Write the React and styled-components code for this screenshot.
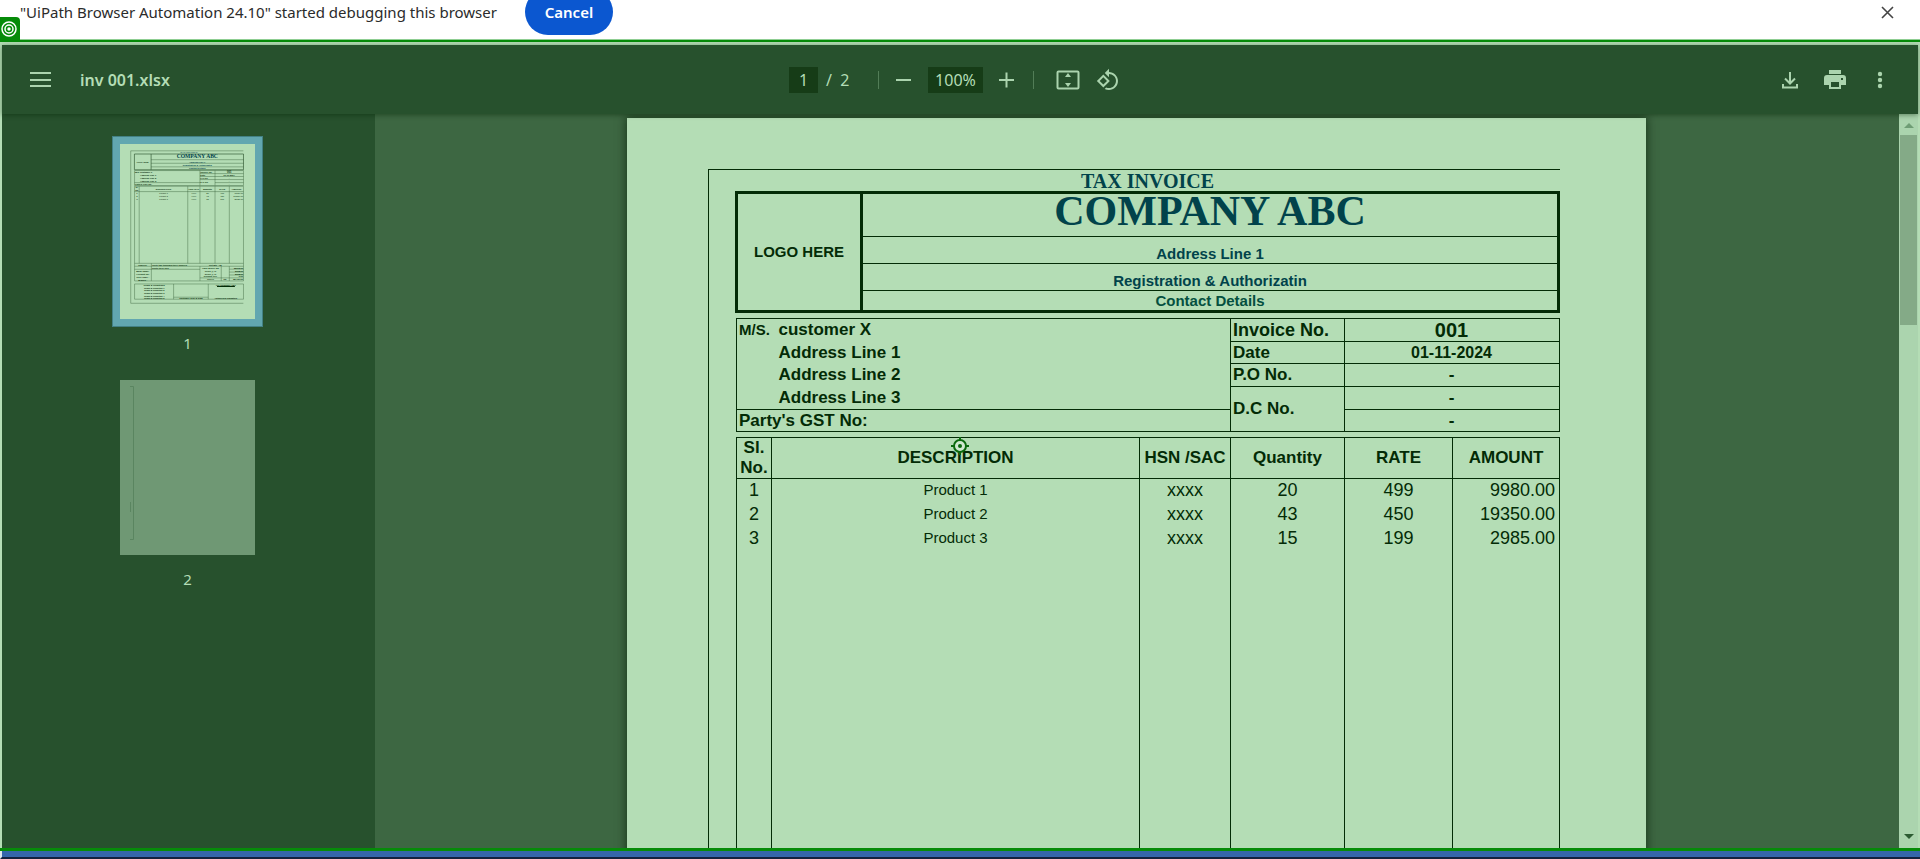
import React from "react";
import styled, { createGlobalStyle } from "styled-components";

const color = {
  toolbar: "#27512d",
  body: "#3d6742",
  page: "#b4ddb5",
  pale: "#abd4ae",
  field: "#163c17",
  ink: "#032b06",
  heading: "#01434b",
  contact: "#05503f",
  highlight: "#068b09",
};

const arial = '"Liberation Sans", Arial, sans-serif';
const serif = '"Liberation Serif", "Times New Roman", serif';
const ui = '"Noto Sans", "Open Sans", sans-serif';

const GlobalStyle = createGlobalStyle`
  * { box-sizing: border-box; }
  body { margin: 0; background: #fff; overflow: hidden; font-family: ${ui}; }
  button, input { font: inherit; }
`;

const Window = styled.div`
  position: relative;
  display: flex;
  flex-direction: column;
  height: 100vh;
`;

/* Browser notice */
const NoticeBar = styled.div`
  height: 39px;
  flex: none;
  overflow: hidden;
  background: #fff;
`;

const NoticeRow = styled.div`
  display: flex;
  align-items: center;
  height: 46px;
  margin-top: -11px;
  padding: 0 26px 0 20px;
  color: #2b2b2b;
  font-size: 15px;
`;

const CancelButton = styled.button`
  height: 46px;
  width: 88px;
  margin-left: 28px;
  padding: 0;
  border: 0;
  border-radius: 23px;
  background: #0b57d0;
  color: #fff;
  font-size: 15px;
  font-weight: 600;
`;

const CloseButton = styled.button`
  display: flex;
  margin-left: auto;
  padding: 0;
  border: 0;
  background: none;
  color: #444;
`;

const TargetTab = styled.div`
  position: absolute;
  left: 0;
  top: 17px;
  display: flex;
  align-items: center;
  width: 20px;
  height: 23px;
  border-radius: 0 4px 0 0;
  background: ${color.highlight};
`;

/* Highlighted viewer */
const Viewer = styled.div`
  position: relative;
  display: flex;
  flex: 1;
  flex-direction: column;
  min-height: 0;
  border-top: 1px solid #8fce92;
  border-bottom: 3px solid ${color.highlight};
`;

const ViewerInner = styled.div`
  display: flex;
  flex: 1;
  flex-direction: column;
  min-height: 0;
  border: solid ${color.page};
  border-width: 3px 2px 0;
  box-shadow: 0 -2px 0 ${color.highlight};
  margin-top: 2px;
`;

const Toolbar = styled.header`
  position: relative;
  z-index: 1;
  display: grid;
  grid-template-columns: 1fr auto 1fr;
  align-items: center;
  height: 69px;
  flex: none;
  padding: 0 22px;
  background: ${color.toolbar};
  box-shadow: 0 1px 5px rgba(0, 30, 0, 0.45);
  color: ${color.page};
  font-size: 16px;
`;

const TitleGroup = styled.div`
  display: flex;
  align-items: center;
  gap: 24px;
`;

const FileName = styled.h1`
  margin: 0;
  font-size: 16px;
  font-weight: 600;
`;

const PageControls = styled.div`
  display: flex;
  align-items: center;
  gap: 8px;
  padding-right: 7px;
`;

const Actions = styled.div`
  display: flex;
  justify-content: flex-end;
  gap: 13px;
`;

const IconButton = styled.button`
  display: flex;
  align-items: center;
  justify-content: center;
  width: 32px;
  height: 32px;
  padding: 0;
  border: 0;
  background: none;
  color: ${color.pale};
`;

const Field = styled.input`
  width: ${(p) => p.$width}px;
  height: 26px;
  padding: 0;
  border: 0;
  background: ${color.field};
  color: ${color.page};
  text-align: center;
`;

const PageCount = styled.span`
  width: 44px;
  white-space: pre;
`;

const Divider = styled.span`
  width: 1px;
  height: 18px;
  margin: 0 ${(p) => p.$after}px 0 ${(p) => p.$before}px;
  background: #527d57;
`;

const Main = styled.div`
  display: flex;
  flex: 1;
  min-height: 0;
  background: ${color.body};
`;

/* Thumbnails */
const Sidebar = styled.nav`
  display: flex;
  flex: none;
  flex-direction: column;
  align-items: center;
  gap: 15px;
  width: 373px;
  padding: 22px 2px 0 0;
  background: ${color.toolbar};
`;

const ThumbButton = styled.button`
  display: flex;
  flex-direction: column;
  align-items: center;
  gap: 2px;
  padding: 0;
  border: 0;
  background: none;
  color: ${color.page};
  font-size: 15px;
  line-height: 28px;
`;

const ThumbFrame = styled.span`
  display: block;
  padding: 7px;
  border: 1px solid ${(p) => (p.$active ? "#438184" : "transparent")};
  background: ${(p) => (p.$active ? "#62a7b0" : "transparent")};
`;

const ThumbPage = styled.svg`
  display: block;
  width: 135px;
  height: 175px;
  background: ${(p) => (p.$active ? color.page : "#6f9874")};
`;

/* Document */
const Canvas = styled.main`
  display: flex;
  flex: 1;
  justify-content: center;
  align-items: flex-start;
  min-width: 0;
  padding: 4px 1px 0 0;
  overflow: hidden;
`;

const Sheet = styled.article`
  flex: none;
  width: 1019px;
  height: 1321px;
  padding: 51px 0 0 81px;
  background: ${color.page};
  box-shadow: 0 0 9px 1px rgba(0, 25, 0, 0.6);
  color: ${color.ink};
  font-family: ${arial};
`;

const SheetFrame = styled.div`
  width: 852px;
  height: 1150px;
  padding-left: 26px;
  border: solid ${color.ink};
  border-width: 1px 0 0 1px;
`;

const InvoiceKind = styled.div`
  height: 21px;
  color: ${color.heading};
  font: bold 20px/22px ${serif};
  text-align: center;
`;

const Letterhead = styled.header`
  display: flex;
  border: 3px solid ${color.ink};
`;

const LogoSlot = styled.div`
  display: flex;
  align-items: center;
  justify-content: center;
  width: 125px;
  padding-bottom: 2px;
  border-right: 3px solid ${color.ink};
  font-size: 15px;
  font-weight: bold;
`;

const LetterheadLines = styled.div`
  flex: 1;
`;

const CompanyName = styled.h2`
  height: 43px;
  margin: 0;
  border-bottom: 1px solid ${color.ink};
  color: ${color.heading};
  font: bold 42px/34px ${serif};
  text-align: center;
`;

const LetterheadLine = styled.div`
  display: flex;
  align-items: flex-end;
  justify-content: center;
  height: 27px;
  border-bottom: 1px solid ${color.ink};
  color: ${color.heading};
  font-size: 15px;
  font-weight: bold;
  line-height: 19px;
  &:last-child {
    height: 19px;
    border-bottom: 0;
    color: ${color.contact};
  }
`;

const Table = styled.table`
  width: 824px;
  margin: 5px 0 0 1px;
  border: 1px solid ${color.ink};
  border-collapse: collapse;
  table-layout: fixed;
  font-size: 17px;
  line-height: 20px;
`;

const Row = styled.tr`
  height: ${(p) => p.$height}px;
`;

const Cell = styled.td`
  padding: 0 3px 0 2px;
  border: ${(p) => (p.$plain ? "0" : `1px solid ${color.ink}`)};
  font-size: ${(p) => p.$size || 17}px;
  font-weight: bold;
  text-align: ${(p) => (p.$center ? "center" : "left")};
`;

const HeadCell = styled.th`
  padding: 0 1px;
  border: 1px solid ${color.ink};
`;

const ItemCell = styled.td`
  padding: 0 4px 2px;
  border: solid ${color.ink};
  border-width: 0 1px;
  font-size: ${(p) => p.$size || 18}px;
  text-align: ${(p) => p.$align || "center"};
`;

/* Scroll bar */
const ScrollTrack = styled.div`
  display: flex;
  flex: none;
  flex-direction: column;
  align-items: center;
  justify-content: space-between;
  width: 19px;
  padding-bottom: 9px;
  background: ${color.pale};
`;

const ScrollTop = styled.div`
  display: flex;
  flex-direction: column;
  align-items: center;
  gap: 7px;
  padding-top: 9px;
`;

const ScrollThumb = styled.div`
  width: 17px;
  height: 190px;
  background: #84aa87;
`;

const Arrow = styled.svg`
  display: block;
  width: 10px;
  height: 5px;
  fill: ${(p) => p.$fill};
`;

const ClickMarker = styled.svg`
  position: absolute;
  left: 50%;
  top: 50%;
  width: 18px;
  height: 18px;
  margin-top: 2px;
  transform: translate(-50%, -50%);
`;

const Taskbar = styled.div`
  height: 8px;
  flex: none;
  border-left: 2px solid #dfe7ef;
  border-bottom: 2px solid #14213f;
  background: #3566ab;
`;

const items = [
  ["1", "Product 1", "xxxx", "20", "499", "9980.00"],
  ["2", "Product 2", "xxxx", "43", "450", "19350.00"],
  ["3", "Product 3", "xxxx", "15", "199", "2985.00"],
];

const itemColumns = [35, 368, 91, 114, 108, 107];

function InvoiceSheet() {
  return (
    <Sheet>
      <SheetFrame>
        <InvoiceKind>TAX INVOICE</InvoiceKind>
        <Letterhead>
          <LogoSlot>LOGO HERE</LogoSlot>
          <LetterheadLines>
            <CompanyName>COMPANY ABC</CompanyName>
            <LetterheadLine>Address Line 1</LetterheadLine>
            <LetterheadLine>Registration &amp; Authorizatin</LetterheadLine>
            <LetterheadLine>Contact Details</LetterheadLine>
          </LetterheadLines>
        </Letterhead>

        <Table>
          <colgroup>
            <col width="40" />
            <col width="454" />
            <col width="114" />
            <col width="215" />
          </colgroup>
          <tbody>
            <Row $height={23}>
              <Cell $plain $size={15}>M/S.</Cell>
              <Cell $plain>customer X</Cell>
              <Cell $size={18}>Invoice No.</Cell>
              <Cell $center $size={20}>001</Cell>
            </Row>
            <Row $height={22}>
              <Cell $plain />
              <Cell $plain>Address Line 1</Cell>
              <Cell>Date</Cell>
              <Cell $center $size={16}>01-11-2024</Cell>
            </Row>
            <Row $height={23}>
              <Cell $plain />
              <Cell $plain>Address Line 2</Cell>
              <Cell>P.O No.</Cell>
              <Cell $center>-</Cell>
            </Row>
            <Row $height={23}>
              <Cell $plain />
              <Cell $plain>Address Line 3</Cell>
              <Cell rowSpan={2}>D.C No.</Cell>
              <Cell $center>-</Cell>
            </Row>
            <Row $height={22}>
              <Cell colSpan={2}>Party's GST No:</Cell>
              <Cell $center>-</Cell>
            </Row>
          </tbody>
        </Table>

        <Table>
          <colgroup>
            {itemColumns.map((w, i) => (
              <col key={i} width={w} />
            ))}
          </colgroup>
          <thead>
            <Row $height={40}>
              <HeadCell>Sl. No.</HeadCell>
              <HeadCell>DESCRIPTION</HeadCell>
              <HeadCell>HSN /SAC</HeadCell>
              <HeadCell>Quantity</HeadCell>
              <HeadCell>RATE</HeadCell>
              <HeadCell>AMOUNT</HeadCell>
            </Row>
          </thead>
          <tbody>
            {items.map(([no, name, hsn, qty, rate, amount]) => (
              <Row key={no} $height={24}>
                <ItemCell>{no}</ItemCell>
                <ItemCell $size={15}>{name}</ItemCell>
                <ItemCell>{hsn}</ItemCell>
                <ItemCell>{qty}</ItemCell>
                <ItemCell>{rate}</ItemCell>
                <ItemCell $align="right">{amount}</ItemCell>
              </Row>
            ))}
            <Row $height={470}>
              {itemColumns.map((_, i) => (
                <ItemCell key={i} />
              ))}
            </Row>
          </tbody>
        </Table>
      </SheetFrame>
    </Sheet>
  );
}

/* Miniature of the whole first page, drawn in the units of the full sheet. */
function FirstPageThumb() {
  const t = (x, y, text, anchor = "middle", size = 17) => (
    <text key={`${x}-${y}`} x={x} y={y} textAnchor={anchor} fontSize={size}>
      {text}
    </text>
  );
  return (
    <ThumbPage $active viewBox="0 0 1020 1321" aria-hidden="true">
      <g fill="none" stroke={color.ink} strokeWidth="3" opacity="0.75">
        <path d="M932 51H81V1203H932" />
        <path d="M109 75H933V194H109ZM235 75V194" strokeWidth="5" />
        <path d="M235 118H933M235 145H933M235 172H933" />
        <path d="M110 200H933V313H110ZM604 200V313M718 200V313M604 223H933M604 245H933M604 268H933M718 291H933M110 291H604" />
        <path d="M110 319H933V901H110ZM145 319V901M512 319V901M604 319V901M718 319V901M826 319V901M110 359H933" />
        <path d="M110 901V1034H933V901M110 923H933M237 901V1034M604 923V1034M110 946H604M765 923V1034M826 923V1034M826 945H933M826 967H933M826 989H933M604 1011H933" />
        <path d="M110 1057H933V1172H110ZM405 1057V1172M667 1057V1172M405 1157H667" />
      </g>
      <g fill={color.ink} fontFamily="Liberation Sans, Arial, sans-serif" fontWeight="bold">
        <g fill={color.heading}>
          <g fontFamily="Liberation Serif, serif">
            {t(521, 70, "TAX INVOICE", "middle", 20)}
            {t(584, 107, "COMPANY ABC", "middle", 42)}
          </g>
          {t(584, 141, "Address Line 1")}
          {t(584, 168, "Registration & Authorizatin")}
          {t(584, 189, "Contact Details")}
        </g>
        {t(172, 140, "LOGO HERE", "middle", 15)}
        {t(113, 218, "M/S.", "start")}
        {t(152, 218, "customer X", "start")}
        {t(152, 240, "Address Line 1", "start")}
        {t(152, 263, "Address Line 2", "start")}
        {t(152, 286, "Address Line 3", "start")}
        {t(113, 308, "Party's GST No:", "start")}
        {t(607, 218, "Invoice No.", "start")}
        {t(607, 240, "Date", "start")}
        {t(607, 263, "P.O No.", "start")}
        {t(607, 292, "D.C No.", "start")}
        {t(825, 218, "001", "middle", 20)}
        {t(825, 240, "01-11-2024")}
        {t(825, 263, "-")}
        {t(825, 286, "-")}
        {t(825, 308, "-")}
        {t(128, 335, "Sl.")}
        {t(128, 355, "No.")}
        {t(329, 346, "DESCRIPTION")}
        {t(558, 346, "HSN /SAC")}
        {t(661, 346, "Quantity")}
        {t(772, 346, "RATE")}
        {t(880, 346, "AMOUNT")}
        {t(172, 919, "Rupees:")}
        {t(242, 919, "Thirty two thousand three hundred", "start", 16)}
        {t(242, 942, "ninety three only", "start", 16)}
        {t(720, 919, "Net Qty : 78")}
        {t(172, 966, "Bank Name:")}
        {t(172, 988, "Account No:")}
        {t(172, 1010, "IFSC Code :")}
        {t(172, 1031, "Branch :")}
        {t(684, 942, "Value Before Tax", "middle", 16)}
        {t(684, 964, "CGST @ %")}
        {t(684, 986, "SGST @ %")}
        {t(684, 1008, "ROUND OFF")}
        {t(684, 1030, "TOTAL")}
        {t(795, 1030, "Rs.")}
        {t(930, 942, "32315.00", "end")}
        {t(930, 964, "2908.00", "end")}
        {t(930, 986, "2908.00", "end")}
        {t(930, 1008, "0.00", "end")}
        {t(930, 1030, "38,131.00", "end")}
        {t(258, 1073, "Terms & Conditions")}
        {t(258, 1092, "Terms & Condition 1", "middle", 16)}
        {t(258, 1112, "Terms & Condition 2", "middle", 16)}
        {t(258, 1130, "Terms & Condition 3", "middle", 16)}
        {t(258, 1154, "Terms & Condition 4", "middle", 16)}
        {t(258, 1170, "Terms & Condition 5", "middle", 16)}
        {t(536, 1170, "Customer Seal & Sign")}
        {t(800, 1073, "For Company ABC")}
        {t(800, 1170, "Authorised Signatory")}
      </g>
      <path d="M733 1076H868" stroke={color.ink} strokeWidth="8" />
      <g fill={color.ink} fontFamily="Liberation Sans, Arial, sans-serif">
        {items.map(([no, name, hsn, qty, rate, amount], i) => (
          <g key={no}>
            {t(128, 378 + i * 24, no, "middle", 18)}
            {t(329, 378 + i * 24, name, "middle", 15)}
            {t(558, 378 + i * 24, hsn, "middle", 18)}
            {t(661, 378 + i * 24, qty, "middle", 18)}
            {t(772, 378 + i * 24, rate, "middle", 18)}
            {t(930, 378 + i * 24, amount, "end", 18)}
          </g>
        ))}
      </g>
    </ThumbPage>
  );
}

function SecondPageThumb() {
  return (
    <ThumbPage viewBox="0 0 135 175" aria-hidden="true">
      <path d="M10 6.500H13.500V159.500H10M10.500 122V132" fill="none" stroke="#5a8560" />
    </ThumbPage>
  );
}

export default function App() {
  return (
    <Window>
      <GlobalStyle />
      <NoticeBar>
        <NoticeRow>
          <span>"UiPath Browser Automation 24.10" started debugging this browser</span>
          <CancelButton type="button">Cancel</CancelButton>
          <CloseButton type="button" aria-label="Close">
            <svg width="13" height="13" viewBox="0 0 13 13" fill="none" stroke="currentColor" strokeWidth="1.600">
              <path d="M1 1 12 12M12 1 1 12" />
            </svg>
          </CloseButton>
        </NoticeRow>
      </NoticeBar>

      <Viewer>
        <ViewerInner>
          <Toolbar>
            <TitleGroup>
              <IconButton type="button" aria-label="Menu">
                <svg width="22" height="16" viewBox="0 0 22 16" fill="currentColor">
                  <path d="M1 0H22V2H1ZM1 7H22V9H1ZM1 13H22V15H1Z" />
                </svg>
              </IconButton>
              <FileName>inv 001.xlsx</FileName>
            </TitleGroup>

            <PageControls>
              <Field $width={29} defaultValue="1" aria-label="Page number" />
              <PageCount>/  2</PageCount>
              <Divider $before={0} $after={1} />
              <IconButton type="button" aria-label="Zoom out">
                <svg width="16" height="16" viewBox="0 0 16 16" stroke="currentColor" strokeWidth="2">
                  <path d="M0 8H15" />
                </svg>
              </IconButton>
              <Field $width={55} defaultValue="100%" aria-label="Zoom level" />
              <IconButton type="button" aria-label="Zoom in">
                <svg width="16" height="16" viewBox="0 0 16 16" stroke="currentColor" strokeWidth="2">
                  <path d="M0 8H15M7.500 .5V15.500" />
                </svg>
              </IconButton>
              <Divider $before={2} $after={10} />
              <IconButton type="button" aria-label="Fit to page">
                <svg width="24" height="20" viewBox="0 0 24 20" fill="none" stroke="currentColor" strokeWidth="2">
                  <rect x="1.500" y="1.500" width="21" height="17" rx="1" />
                  <path d="M12 3 15 7H9ZM12 17 9 13H15Z" fill="currentColor" stroke="none" />
                </svg>
              </IconButton>
              <IconButton type="button" aria-label="Rotate counterclockwise">
                <svg width="24" height="24" viewBox="0 0 24 24" fill="currentColor">
                  <path d="M7.340 6.410.860 12.900l6.490 6.480 6.490-6.480-6.500-6.490zM3.690 12.900l3.660-3.660L11 12.900l-3.660 3.660-3.650-3.660zm15.670-6.260C17.610 4.880 15.300 4 13 4V.760L8.760 5 13 9.240V6c1.790 0 3.580.680 4.950 2.050 2.730 2.730 2.730 7.170 0 9.900C16.580 19.320 14.790 20 13 20c-.97 0-1.940-.21-2.840-.61l-1.490 1.490C10.020 21.620 11.510 22 13 22c2.300 0 4.610-.88 6.360-2.640 3.520-3.510 3.520-9.210 0-12.720z" />
                </svg>
              </IconButton>
            </PageControls>

            <Actions>
              <IconButton type="button" aria-label="Download">
                <svg width="16" height="18" viewBox="0 0 16 18" fill="none" stroke="currentColor" strokeWidth="2">
                  <path d="M8 1V12M3 7.500 8 12.500 13 7.500M1 13V16.500H15V13" />
                </svg>
              </IconButton>
              <IconButton type="button" aria-label="Print">
                <svg width="22" height="20" viewBox="0 0 22 20">
                  <path
                    fill="currentColor"
                    fillRule="evenodd"
                    d="M5 0H17V4H5ZM3 5H19Q22 5 22 8V15H17V19H5V15H0V8Q0 5 3 5ZM7 12V17H15V12ZM17 8V10H19V8Z"
                  />
                </svg>
              </IconButton>
              <IconButton type="button" aria-label="More actions">
                <svg width="6" height="18" viewBox="0 0 6 18" fill="currentColor">
                  <circle cx="3" cy="3" r="2.200" />
                  <circle cx="3" cy="9" r="2.200" />
                  <circle cx="3" cy="15" r="2.200" />
                </svg>
              </IconButton>
            </Actions>
          </Toolbar>

          <Main>
            <Sidebar aria-label="Pages">
              <ThumbButton type="button">
                <ThumbFrame $active>
                  <FirstPageThumb />
                </ThumbFrame>
                1
              </ThumbButton>
              <ThumbButton type="button">
                <ThumbFrame>
                  <SecondPageThumb />
                </ThumbFrame>
                2
              </ThumbButton>
            </Sidebar>
            <Canvas>
              <InvoiceSheet />
            </Canvas>
            <ScrollTrack>
              <ScrollTop>
                <Arrow $fill="#6f9d75" viewBox="0 0 10 5">
                  <path d="M5 0 10 5H0Z" />
                </Arrow>
                <ScrollThumb />
              </ScrollTop>
              <Arrow $fill="#2c5b32" viewBox="0 0 10 5">
                <path d="M0 0H10L5 5Z" />
              </Arrow>
            </ScrollTrack>
          </Main>
        </ViewerInner>
        <ClickMarker viewBox="0 0 18 18" aria-hidden="true">
          <circle cx="9" cy="9" r="6" fill="#cfe9cf" stroke="#0a6a0d" strokeWidth="2" />
          <circle cx="9" cy="9" r="2" fill="#0a6a0d" />
          <path d="M9 0V3M9 15V18M0 9H3M15 9H18" stroke="#0a6a0d" strokeWidth="2" />
        </ClickMarker>
      </Viewer>
      <Taskbar />

      <TargetTab>
        <svg width="18" height="18" viewBox="0 0 18 18" fill="none" stroke="#fff" strokeWidth="1.500">
          <circle cx="9" cy="9" r="7" />
          <circle cx="9" cy="9" r="4" />
          <circle cx="9" cy="9" r="1" fill="#fff" />
        </svg>
      </TargetTab>
    </Window>
  );
}
